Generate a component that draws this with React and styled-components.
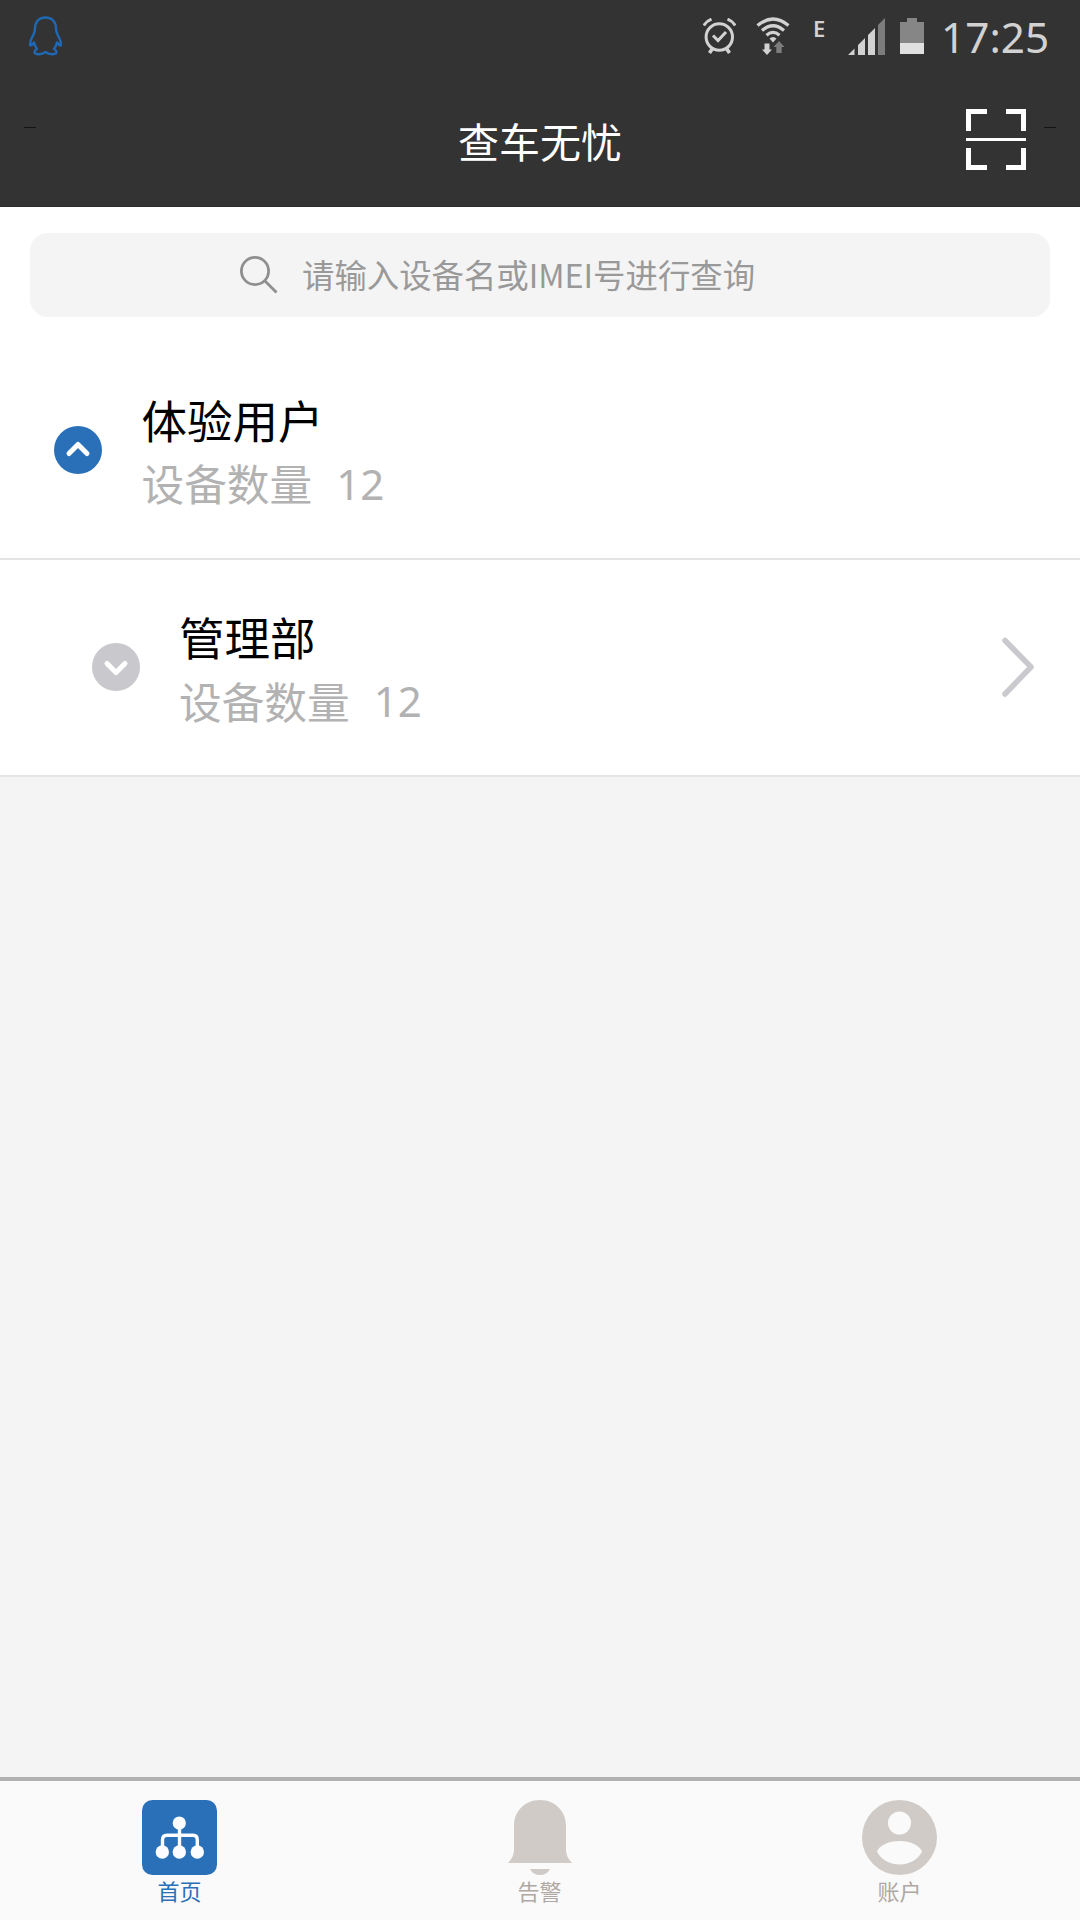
import styled, { createGlobalStyle } from "styled-components";

const GROUPS = [
  { id: 1, name: "体验用户", count: 12, level: 0, open: true },
  { id: 2, name: "管理部", count: 12, level: 1, open: false },
];

const TABS = [
  { id: "home", label: "首页", Icon: HomeIcon, active: true },
  { id: "alarm", label: "告警", Icon: BellIcon },
  { id: "account", label: "账户", Icon: AccountIcon },
];

function App() {
  return (
    <>
      <GlobalStyle />
      <Page>
        <Header>
          <StatusBar>
            <PenguinIcon />
            <StatusIcons>
              <AlarmIcon />
              <WifiIcon />
              <NetworkType>E</NetworkType>
              <SignalIcon />
              <BatteryIcon />
              <Clock>17:25</Clock>
            </StatusIcons>
          </StatusBar>
          <NavBar>
            <NavSide>
              <Dash />
            </NavSide>
            <Title>查车无忧</Title>
            <NavSide $end>
              <ScanIcon />
              <Dash />
            </NavSide>
          </NavBar>
        </Header>

        <SearchArea>
          <SearchBox>
            <SearchIcon />
            <Placeholder>请输入设备名或IMEI号进行查询</Placeholder>
          </SearchBox>
        </SearchArea>

        {/* 设备分组列表 */}
        <List>
          {GROUPS.map((g) => (
            <Row key={g.id} $level={g.level}>
              <Toggle $open={g.open}>
                <svg width="48" height="48" viewBox="0 0 48 48">
                  <path
                    d={g.open ? "M15 27.5L24 18.5L33 27.5" : "M15 20.5L24 29.5L33 20.5"}
                    fill="none"
                    stroke="#fff"
                    strokeWidth="5"
                    strokeLinecap="round"
                    strokeLinejoin="round"
                  />
                </svg>
              </Toggle>
              <RowText>
                <GroupName>{g.name}</GroupName>
                <DeviceCount>
                  设备数量<Count>{g.count}</Count>
                </DeviceCount>
              </RowText>
              {!g.open && <ArrowIcon />}
            </Row>
          ))}
        </List>

        <TabBar>
          {TABS.map(({ id, label, Icon, active }) => (
            <Tab key={id}>
              <Icon />
              <TabLabel $active={active}>{label}</TabLabel>
            </Tab>
          ))}
        </TabBar>
      </Page>
    </>
  );
}

export default App;

// 图标
function PenguinIcon() {
  return (
    <svg width="36" height="40" viewBox="0 0 36 40" fill="none" stroke="#1f68b4" strokeWidth="2.4" strokeLinejoin="round" strokeLinecap="round">
      <path d="M17.5 1.5C10.5 1.5 7 6.5 7 12.5C7 15 6.5 16.5 5.5 18.5C3.5 22 1.5 25.5 2.3 29.5C4 29.5 5 28 6 26.5C6.5 29.5 7.5 31 9 33C6 34.2 5.5 37.5 9 38C12 38.5 15 38 17.5 36C20 38 23 38.5 26 38C29.5 37.5 29 34.2 26 33C27.5 31 28.5 29.5 29 26.5C30 28 31 29.5 32.7 29.5C33.5 25.5 31.5 22 29.5 18.5C28.5 16.5 28 15 28 12.5C28 6.5 24.5 1.5 17.5 1.5Z" />
    </svg>
  );
}

function AlarmIcon() {
  return (
    <svg width="33" height="36" viewBox="0 0 33 36" fill="none" stroke="#d2d2d2" strokeWidth="3">
      <circle cx="16.3" cy="19" r="13.2" />
      <path d="M10 17.5L15 22.5L23 14" />
      <path d="M.8 7.5Q3.5 3 8.5 1.2M32.2 7.5Q29.5 3 24.5 1.2" />
      <path d="M9.5 30.5L6.5 35M23.5 30.5L26.5 35" strokeWidth="3.6" />
    </svg>
  );
}

function WifiIcon() {
  return (
    <StatusSvg $left={20} width="34" height="38" viewBox="0 0 34 38">
      <g fill="none" stroke="#d2d2d2" strokeWidth="3.2">
        <path d="M1.5 8.5Q17 -4.5 32.5 8.5" />
        <path d="M6 13.5Q17 4 28 13.5" />
        <path d="M10.5 18.2Q17 12.5 23.5 18.2" />
      </g>
      <path d="M13.5 21.5Q17 18.5 20.5 21.5L17 25.5Z" fill="#d2d2d2" />
      <path d="M8.5 26.5H13.5V32.5H16L11 38L6 32.5H8.5Z" fill="#d2d2d2" />
      <path d="M20.3 36H25.7V30H28.5L23 24L17.5 30H20.3Z" fill="#7c7c7c" />
    </StatusSvg>
  );
}

function SignalIcon() {
  return (
    <StatusSvg $left={23} width="37" height="37" viewBox="0 0 37 37">
      <path d="M0 37L6.5 30.5V37Z M10 37V27L17 20V37Z M20 37V17L27 10V37Z" fill="#d2d2d2" />
      <path d="M30 37V7L37 0V37Z" fill="#7c7c7c" />
    </StatusSvg>
  );
}

function BatteryIcon() {
  return (
    <StatusSvg $left={15} width="24" height="36" viewBox="0 0 24 36">
      <path d="M7 0H17V4H24V25H0V4H7Z" fill="#868686" />
      <path d="M0 25H24V36H0Z" fill="#e0e0e0" />
    </StatusSvg>
  );
}

function ScanIcon() {
  return (
    <svg width="60" height="61" viewBox="0 0 60 61" fill="none" stroke="#fff" strokeWidth="5">
      <path d="M21 2.5H2.5V22M40 2.5H57.5V22M2.5 39V58.5H21M57.5 39V58.5H40" />
      <path d="M0 30.5H60" strokeWidth="3" />
    </svg>
  );
}

function SearchIcon() {
  return (
    <svg width="38" height="38" viewBox="0 0 38 38" fill="none" stroke="#8f8f8f" strokeWidth="2.8">
      <circle cx="15" cy="15" r="13.6" />
      <path d="M24.5 24.5L36.5 36.5" />
    </svg>
  );
}

function ArrowIcon() {
  return (
    <svg width="32" height="60" viewBox="0 0 32 60" fill="none" stroke="#c9c9ce" strokeWidth="5.5" strokeLinecap="round" strokeLinejoin="round">
      <path d="M3 3.5L29 30L3 57" />
    </svg>
  );
}

function HomeIcon() {
  return (
    <svg width="75" height="75" viewBox="0 0 75 75">
      <rect width="75" height="75" rx="10.5" fill="#2970b8" />
      <path d="M37.5 23V52M20.5 52V40Q20.5 35.3 25 35.3H51Q55.3 35.3 55.3 40V52" fill="none" stroke="#fafcff" strokeWidth="3.4" />
      <g fill="#fafcff">
        <circle cx="37.3" cy="23" r="6.6" />
        <circle cx="20.3" cy="52" r="6.7" />
        <circle cx="37.3" cy="52" r="6.7" />
        <circle cx="55.3" cy="52" r="6.7" />
      </g>
    </svg>
  );
}

function BellIcon() {
  return (
    <svg width="64" height="75" viewBox="0 0 64 75" fill="#d0cbc7">
      <path d="M6 26C6 11 17 0 32 0S58 11 58 26V50Q58 57 64 63H0Q6 57 6 50Z" />
      <path d="M22 69H42Q39 75 32 75T22 69Z" />
    </svg>
  );
}

function AccountIcon() {
  return (
    <svg width="75" height="75" viewBox="0 0 75 75">
      <circle cx="37.5" cy="37.5" r="37.5" fill="#d0cbc7" />
      <circle cx="37.5" cy="23" r="11.5" fill="#fafafa" />
      <path d="M15 51.5C17 46 26 41 37.5 41S58 46 60 51.5C57 58.5 48 64.5 37.5 64.5S18 58.5 15 51.5Z" fill="#fafafa" />
    </svg>
  );
}

// 样式
const GlobalStyle = createGlobalStyle`
  * {
    box-sizing: border-box;
  }

  body {
    margin: 0;
    background: #f4f4f4;
    font-family: "Noto Sans CJK SC", sans-serif;
  }

  svg {
    display: block;
    flex-shrink: 0;
  }
`;

const Page = styled.div`
  display: flex;
  flex-direction: column;
  width: 1080px;
  height: 1920px;
  overflow: hidden;
  background: #f4f4f4;
`;

const Header = styled.header`
  height: 207px;
  background: #333;
  border-bottom: 1px solid #2b2b2b;
`;

const StatusBar = styled.div`
  display: flex;
  align-items: center;
  justify-content: space-between;
  height: 72px;
  padding: 0 32px 0 28px;
`;

const StatusIcons = styled.div`
  display: flex;
  align-items: center;
`;

const StatusSvg = styled.svg`
  margin-left: ${({ $left }) => $left}px;
`;

const NetworkType = styled.span`
  width: 12px;
  margin: 0 0 16px 23px;
  color: #d2d2d2;
  font: 600 22px/22px "Noto Sans", sans-serif;
`;

const Clock = styled.span`
  width: 107px;
  margin: 2px 0 0 17px;
  color: #d2d2d2;
  font: 400 42.3px/50px "Noto Sans", sans-serif;
  white-space: nowrap;
`;

const NavBar = styled.div`
  display: grid;
  grid-template-columns: 1fr auto 1fr;
  align-items: center;
  height: 134px;
  padding: 0 24px;
`;

const NavSide = styled.div`
  display: flex;
  align-items: center;
  justify-content: ${({ $end }) => ($end ? "flex-end" : "flex-start")};
  gap: 18px;
`;

const Dash = styled.span`
  width: 12px;
  height: 1px;
  margin-bottom: 24px;
  background: #141414;
`;

const Title = styled.h1`
  margin: 2px 0 0;
  color: #fff;
  font-size: 41px;
  font-weight: 400;
  line-height: 60px;
`;

const SearchArea = styled.div`
  height: 135px;
  padding: 26px 30px 0;
  background: #fff;
`;

const SearchBox = styled.div`
  display: flex;
  align-items: center;
  gap: 24px;
  height: 84px;
  padding-left: 210px;
  border-radius: 18px;
  background: #f4f4f4;
`;

const Placeholder = styled.span`
  margin-bottom: 3px;
  color: #999;
  font-size: 32.4px;
  line-height: 48px;
`;

const List = styled.main`
  flex: 1;
`;

const Row = styled.div`
  display: flex;
  align-items: center;
  height: 217.5px;
  padding: 0 46px 0 ${({ $level }) => 54 + $level * 37.5}px;
  border-bottom: 2px solid #e4e4e4;
  background: #fff;
`;

const Toggle = styled.div`
  width: 48px;
  height: 48px;
  border-radius: 50%;
  background: ${({ $open }) => ($open ? "#2970b8" : "#c8c8cd")};
`;

const RowText = styled.div`
  flex: 1;
  margin: 3px 0 0 39.5px;
`;

const GroupName = styled.div`
  color: #000;
  font-size: 45.5px;
  line-height: 62px;
`;

const DeviceCount = styled.div`
  display: flex;
  align-items: center;
  color: #b2b2b2;
  font-size: 42.7px;
  line-height: 62px;
`;

const Count = styled.span`
  margin: 3px 0 0 24px;
  font-family: "Noto Sans", sans-serif;
  font-size: 42px;
`;

const TabBar = styled.nav`
  display: flex;
  height: 143px;
  padding-top: 19px;
  border-top: 4px solid #b1b1b1;
  background: #fafafa;
`;

const Tab = styled.div`
  display: flex;
  flex: 1;
  flex-direction: column;
  align-items: center;
  padding-right: 1px;
`;

const TabLabel = styled.span`
  margin-top: -1px;
  color: ${({ $active }) => ($active ? "#2970b8" : "#b0a8a2")};
  font-size: 22px;
  line-height: 32px;
`;
